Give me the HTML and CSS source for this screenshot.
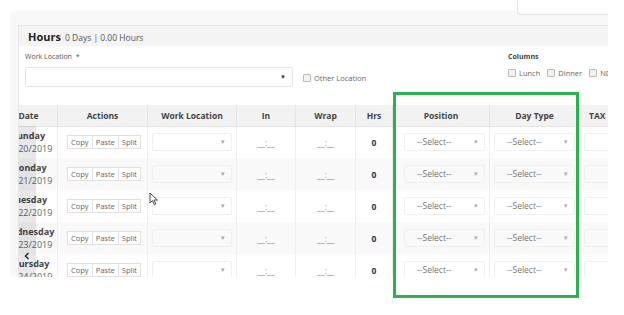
FILE: index.html
```html
<!DOCTYPE html>
<html lang="en">
<head>
  <meta charset="UTF-8" />
  <meta name="viewport" content="width=device-width, initial-scale=1" />
  <title>Hours</title>
  <link rel="stylesheet" href="styles.css">
</head>

<body>
  <div class="page">
    <div class="top-tab"></div>

    <div class="panel">
      <div class="card">
        <div class="card-head">
          <span class="card-title">Hours</span>
          <span class="card-meta">0 Days | 0.00 Hours</span>
        </div>

        <!-- Work location + column toggles -->
        <div class="card-form">
          <div class="field">
            <div class="field-label">Work Location <span class="req">*</span></div>
            <div class="field-row">
              <div class="select select-lg"><span class="arrow-dark">&#9660;</span></div>
              <label class="check"><span class="box"></span>Other Location</label>
            </div>
          </div>
          <div class="columns">
            <div class="columns-title">Columns</div>
            <div class="columns-row">
              <label class="check"><span class="box"></span>Lunch</label>
              <label class="check"><span class="box"></span>Dinner</label>
              <label class="check"><span class="box"></span>ND</label>
            </div>
          </div>
        </div>

        <!-- Timesheet table -->
        <div class="table-wrap">
          <table class="hours-table">
            <colgroup>
              <col class="c-date"><col class="c-actions"><col class="c-loc"><col class="c-in">
              <col class="c-wrap"><col class="c-hrs"><col class="c-pos"><col class="c-day"><col class="c-tax">
            </colgroup>
            <thead>
              <tr>
                <th>Date</th><th>Actions</th><th>Work Location</th><th>In</th><th>Wrap</th>
                <th>Hrs</th><th>Position</th><th>Day Type</th><th>TAX</th>
              </tr>
            </thead>
            <tbody>
              <tr>
                <td class="date"><b>Sunday</b><span>10/20/2019</span></td>
                <td><div class="btn-group"><span class="btn">Copy</span><span class="btn">Paste</span><span class="btn">Split</span></div></td>
                <td><div class="select select-sm"><span class="arrow">&#9662;</span></div></td>
                <td class="time">__:__</td>
                <td class="time">__:__</td>
                <td class="hrs">0</td>
                <td><div class="select select-sm">--Select--<span class="arrow">&#9662;</span></div></td>
                <td><div class="select select-sm">--Select--<span class="arrow">&#9662;</span></div></td>
                <td><div class="select select-sm"></div></td>
              </tr>
              <tr>
                <td class="date"><b>Monday</b><span>10/21/2019</span></td>
                <td><div class="btn-group"><span class="btn">Copy</span><span class="btn">Paste</span><span class="btn">Split</span></div></td>
                <td><div class="select select-sm"><span class="arrow">&#9662;</span></div></td>
                <td class="time">__:__</td>
                <td class="time">__:__</td>
                <td class="hrs">0</td>
                <td><div class="select select-sm">--Select--<span class="arrow">&#9662;</span></div></td>
                <td><div class="select select-sm">--Select--<span class="arrow">&#9662;</span></div></td>
                <td><div class="select select-sm"></div></td>
              </tr>
              <tr>
                <td class="date"><b>Tuesday</b><span>10/22/2019</span></td>
                <td><div class="btn-group"><span class="btn">Copy</span><span class="btn">Paste</span><span class="btn">Split</span></div></td>
                <td><div class="select select-sm"><span class="arrow">&#9662;</span></div></td>
                <td class="time">__:__</td>
                <td class="time">__:__</td>
                <td class="hrs">0</td>
                <td><div class="select select-sm">--Select--<span class="arrow">&#9662;</span></div></td>
                <td><div class="select select-sm">--Select--<span class="arrow">&#9662;</span></div></td>
                <td><div class="select select-sm"></div></td>
              </tr>
              <tr>
                <td class="date"><b>Wednesday</b><span>10/23/2019</span></td>
                <td><div class="btn-group"><span class="btn">Copy</span><span class="btn">Paste</span><span class="btn">Split</span></div></td>
                <td><div class="select select-sm"><span class="arrow">&#9662;</span></div></td>
                <td class="time">__:__</td>
                <td class="time">__:__</td>
                <td class="hrs">0</td>
                <td><div class="select select-sm">--Select--<span class="arrow">&#9662;</span></div></td>
                <td><div class="select select-sm">--Select--<span class="arrow">&#9662;</span></div></td>
                <td><div class="select select-sm"></div></td>
              </tr>
              <tr>
                <td class="date"><b>Thursday</b><span>10/24/2019</span></td>
                <td><div class="btn-group"><span class="btn">Copy</span><span class="btn">Paste</span><span class="btn">Split</span></div></td>
                <td><div class="select select-sm"><span class="arrow">&#9662;</span></div></td>
                <td class="time">__:__</td>
                <td class="time">__:__</td>
                <td class="hrs">0</td>
                <td><div class="select select-sm">--Select--<span class="arrow">&#9662;</span></div></td>
                <td><div class="select select-sm">--Select--<span class="arrow">&#9662;</span></div></td>
                <td><div class="select select-sm"></div></td>
              </tr>
            </tbody>
          </table>

          <div class="scroll-left">
            <svg width="6" height="8" viewBox="0 0 6 8"><path d="M4.5 1 L1.5 4 L4.5 7" fill="none" stroke="#333" stroke-width="1.6"/></svg>
          </div>
        </div>
      </div>
    </div>

    <!-- annotation box -->
    <div class="highlight"></div>

    <svg class="pointer" width="10" height="14" viewBox="0 0 10 14">
      <path d="M1 1 L1 11 L3.5 8.6 L5.3 12.6 L6.8 11.9 L5 8 L8.4 8 Z" fill="#fff" stroke="#333" stroke-width="0.9" stroke-linejoin="round"/>
    </svg>
  </div>
</body>
</html>
```

FILE: styles.css
```css
* {
  margin: 0;
  padding: 0;
  box-sizing: border-box;
}

body {
  font-family: 'Open Sans', 'Liberation Sans', sans-serif;
  background-color: #fff;
  color: #444;
  width: 624px;
  height: 315px;
  overflow: hidden;
}

.page {
  position: relative;
  height: 315px;
  padding-top: 11px;
}

/* tab of the element sitting above the panel */
.top-tab {
  position: absolute;
  left: 517px;
  top: 0;
  width: 91px;
  height: 15px;
  background-color: #fff;
  border-left: 1px solid #e2e2e2;
  border-bottom: 1px solid #e2e2e2;
  border-bottom-left-radius: 4px;
  z-index: 2;
}

.panel {
  margin-left: 10px;
  width: 598px;
  height: 266px;
  background-color: #f8f8f8;
  padding: 14px 0 0 8px;
  overflow: hidden;
}

.card {
  height: 100%;
  background-color: #fff;
  border: 1px solid #e6e6e6;
  border-right: none;
  border-bottom: none;
}

.card-head {
  height: 20px;
  background-color: #f4f4f4;
  display: flex;
  align-items: baseline;
  gap: 4px;
  padding: 3px 0 0 9px;
}

.card-title {
  font-size: 11px;
  font-weight: 700;
  color: #222;
}

.card-meta {
  font-size: 8.5px;
  color: #555;
}

.card-form {
  display: flex;
  padding: 6px 0 0 6px;
  height: 44px;
}

.field-label {
  font-size: 7px;
  color: #555;
  line-height: 10px;
  margin-bottom: 5px;
}

.req {
  margin-left: 2px;
}

.field-row {
  display: flex;
  align-items: center;
}

.select {
  position: relative;
  background-color: #fff;
  border: 1px solid #e4e4e4;
  border-radius: 2px;
}

.select-lg {
  width: 268px;
  height: 20px;
}

.arrow-dark {
  position: absolute;
  right: 6px;
  top: 5px;
  font-size: 6px;
  color: #333;
}

.check {
  display: flex;
  align-items: center;
  gap: 3px;
  font-size: 7.5px;
  color: #666;
  white-space: nowrap;
}

.field-row .check {
  margin-left: 10px;
  margin-top: 2px;
}

.box {
  width: 8px;
  height: 8px;
  border: 1px solid #bbb;
  border-radius: 1px;
  background-color: #f2f2f2;
}

.columns {
  margin-left: auto;
  width: 101px;
  padding-left: 1px;
}

.columns-title {
  font-size: 7px;
  font-weight: 700;
  color: #444;
  line-height: 10px;
  margin-bottom: 6px;
}

.columns-row {
  display: flex;
  gap: 7px;
}

/* table */
.table-wrap {
  position: relative;
  margin-top: 15px;
  overflow: hidden;
  height: 172px;
}

.hours-table {
  margin-left: -20px;
  width: 660px;
  table-layout: fixed;
  border-collapse: collapse;
}

.c-date { width: 58px; }
.c-actions { width: 90px; }
.c-loc { width: 89px; }
.c-in { width: 59px; }
.c-wrap { width: 60px; }
.c-hrs { width: 37px; }
.c-pos { width: 97px; }
.c-day { width: 90px; }
.c-tax { width: 80px; }

.hours-table th {
  height: 21px;
  background-color: #f2f2f2;
  font-size: 8.5px;
  font-weight: 700;
  color: #444;
  text-align: center;
  border-left: 1px solid #e4e4e4;
  border-bottom: 1px solid #e4e4e4;
  white-space: nowrap;
  overflow: hidden;
}

.hours-table th:nth-child(9) {
  text-align: left;
  padding-left: 9px;
}

.hours-table td {
  height: 32px;
  text-align: center;
  vertical-align: middle;
  border-left: 1px solid #eee;
  font-size: 8.5px;
  white-space: nowrap;
}

.hours-table tbody tr:nth-child(even) td {
  background-color: #f9f9f9;
}

.date b,
.date span {
  display: block;
  font-size: 9px;
  line-height: 13px;
}

.date b {
  color: #444;
}

.date span {
  color: #666;
}

.btn-group {
  display: inline-flex;
  margin-left: 4px;
}

.btn {
  height: 14px;
  line-height: 12px;
  padding: 0 3px;
  border: 1px solid #e0e0e0;
  background-color: #fff;
  font-size: 7.5px;
  color: #666;
  margin-left: -1px;
}

.select-sm {
  margin: 0 4px;
  height: 18px;
  line-height: 16px;
  font-size: 8.5px;
  color: #777;
  text-align: left;
  padding-left: 12px;
  border-color: #f0f0f0;
}

.hours-table td:nth-child(7) .select-sm {
  margin: 0 4px 0 11px;
}

.hours-table tbody tr:nth-child(even) .select-sm {
  background-color: #f9f9f9;
}

.arrow {
  position: absolute;
  right: 6px;
  top: 0;
  font-size: 7px;
  color: #aaa;
}

.time {
  color: #888;
  font-size: 9px;
}

.hrs {
  font-weight: 700;
  color: #333;
}

.scroll-left {
  position: absolute;
  left: -1px;
  top: 21px;
  width: 18px;
  bottom: 0;
  background-color: rgba(0, 0, 0, 0.09);
  display: flex;
  justify-content: center;
  padding-top: 126px;
}

.highlight {
  position: absolute;
  left: 393px;
  top: 92px;
  width: 186px;
  height: 206px;
  border: 3px solid #2bb24c;
}

.pointer {
  position: absolute;
  left: 149px;
  top: 192px;
}
```
